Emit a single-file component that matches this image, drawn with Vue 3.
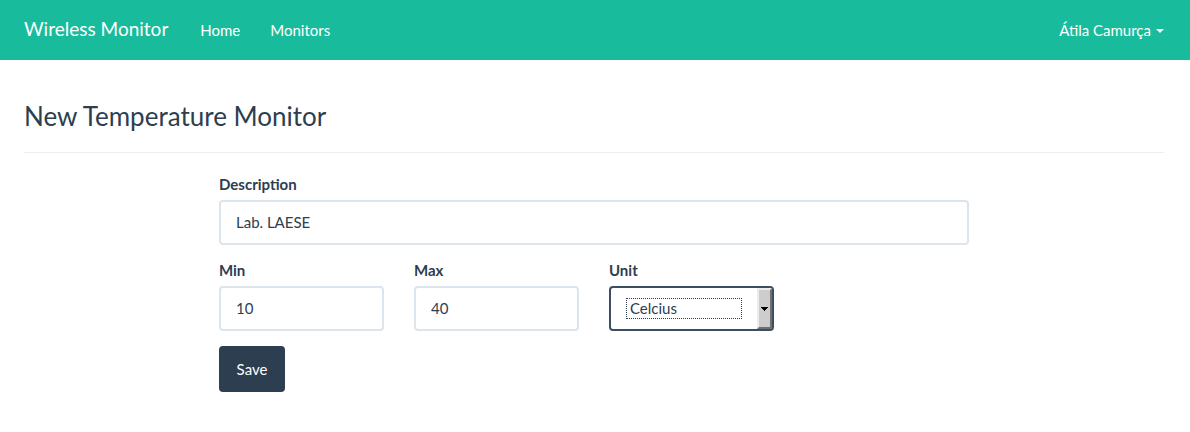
<script setup>
import { ref } from 'vue'

const description = ref('Lab. LAESE')
const min = ref('10')
const max = ref('40')
const unit = ref('Celcius')
const units = ['Celcius', 'Fahrenheit', 'Kelvin']
</script>

<template>
  <header class="navbar">
    <a class="brand" href="#">Wireless Monitor</a>
    <nav class="links">
      <a href="#">Home</a>
      <a href="#">Monitors</a>
    </nav>
    <button class="user" type="button">
      Átila Camurça
      <svg class="caret" width="8" height="4" viewBox="0 0 8 4" aria-hidden="true">
        <path d="M0 0H8L4 4Z" fill="currentColor" />
      </svg>
    </button>
  </header>

  <main class="container">
    <h1>New Temperature Monitor</h1>
    <form class="form" @submit.prevent>
      <div class="field">
        <label for="description">Description</label>
        <input id="description" v-model="description" class="control" type="text" />
      </div>
      <div class="row">
        <div class="field">
          <label for="min">Min</label>
          <input id="min" v-model="min" class="control" type="text" />
        </div>
        <div class="field">
          <label for="max">Max</label>
          <input id="max" v-model="max" class="control" type="text" />
        </div>
        <div class="field">
          <label for="unit">Unit</label>
          <div class="select-box">
            <select id="unit" v-model="unit" class="control select">
              <option v-for="name in units" :key="name">{{ name }}</option>
            </select>
            <span class="focus-ring"></span>
            <span class="drop">
              <svg width="7" height="4" viewBox="0 0 7 4" aria-hidden="true">
                <path d="M0 0H7V1H6V2H5V3H4V4H3V3H2V2H1V1H0Z" fill="#000" />
              </svg>
            </span>
          </div>
        </div>
      </div>
      <button class="save" type="submit">Save</button>
    </form>
  </main>
</template>

<style>
body {
  background: #fff;
}
</style>

<style scoped>
.navbar,
.container {
  box-sizing: border-box;
  padding: 0 26px 0 24px;
  font-family: Lato, "Liberation Sans", sans-serif;
  font-size: 15px;
  line-height: 21px;
  color: #2c3e50;
}

.navbar {
  display: flex;
  align-items: center;
  height: 60px;
  background: #18bc9c;
  color: #fff;
}

.navbar a {
  color: inherit;
  text-decoration: none;
}

.navbar .brand {
  margin-right: 32px;
  padding-bottom: 4px;
  font-size: 19px;
}

.links {
  display: flex;
  gap: 30px;
}

.user {
  display: flex;
  align-items: center;
  gap: 5px;
  margin-left: auto;
  padding: 0;
  border: 0;
  background: none;
  color: inherit;
  font: inherit;
}

.caret {
  margin-top: 2px;
}

h1 {
  margin: 39px 0 21px;
  padding-bottom: 18px;
  border-bottom: 1px solid #ecf0f1;
  font-size: 26px;
  font-weight: 400;
  line-height: 35px;
}

.form {
  display: flex;
  flex-direction: column;
  align-items: stretch;
  gap: 15px;
  width: calc((100% + 30px) * 2 / 3 - 30px);
  margin-left: calc((100% + 30px) / 6);
}

.row {
  display: grid;
  grid-template-columns: repeat(4, 1fr);
  gap: 30px;
}

.field {
  min-width: 0;
}

label {
  display: block;
  margin-bottom: 5px;
  font-weight: 700;
}

.control {
  display: block;
  box-sizing: border-box;
  width: 100%;
  height: 45px;
  padding: 9px 15px 11px;
  border: 2px solid #dce4ec;
  border-radius: 4px;
  outline: 0;
  background: #fff;
  color: #2c3e50;
  font: inherit;
}

.select-box {
  position: relative;
}

.select {
  appearance: none;
  padding: 10px 30px 10px 19px;
  border-color: #3c4f62;
}

.focus-ring {
  position: absolute;
  inset: 12px 32px 12px 17px;
  border: 1px dotted #2c3e50;
  pointer-events: none;
}

.drop {
  position: absolute;
  inset: 2px 2px 2px auto;
  display: flex;
  align-items: center;
  justify-content: center;
  box-sizing: border-box;
  width: 15px;
  border: 2px solid;
  border-color: #ececec #707070 #707070 #ececec;
  border-radius: 0 2px 2px 0;
  background: #cdcdcd;
  pointer-events: none;
}

.save {
  align-self: flex-start;
  min-width: 66px;
  height: 46px;
  padding: 0 17px;
  border: 0;
  border-radius: 4px;
  background: #2c3e50;
  color: #fff;
  font: inherit;
}
</style>
